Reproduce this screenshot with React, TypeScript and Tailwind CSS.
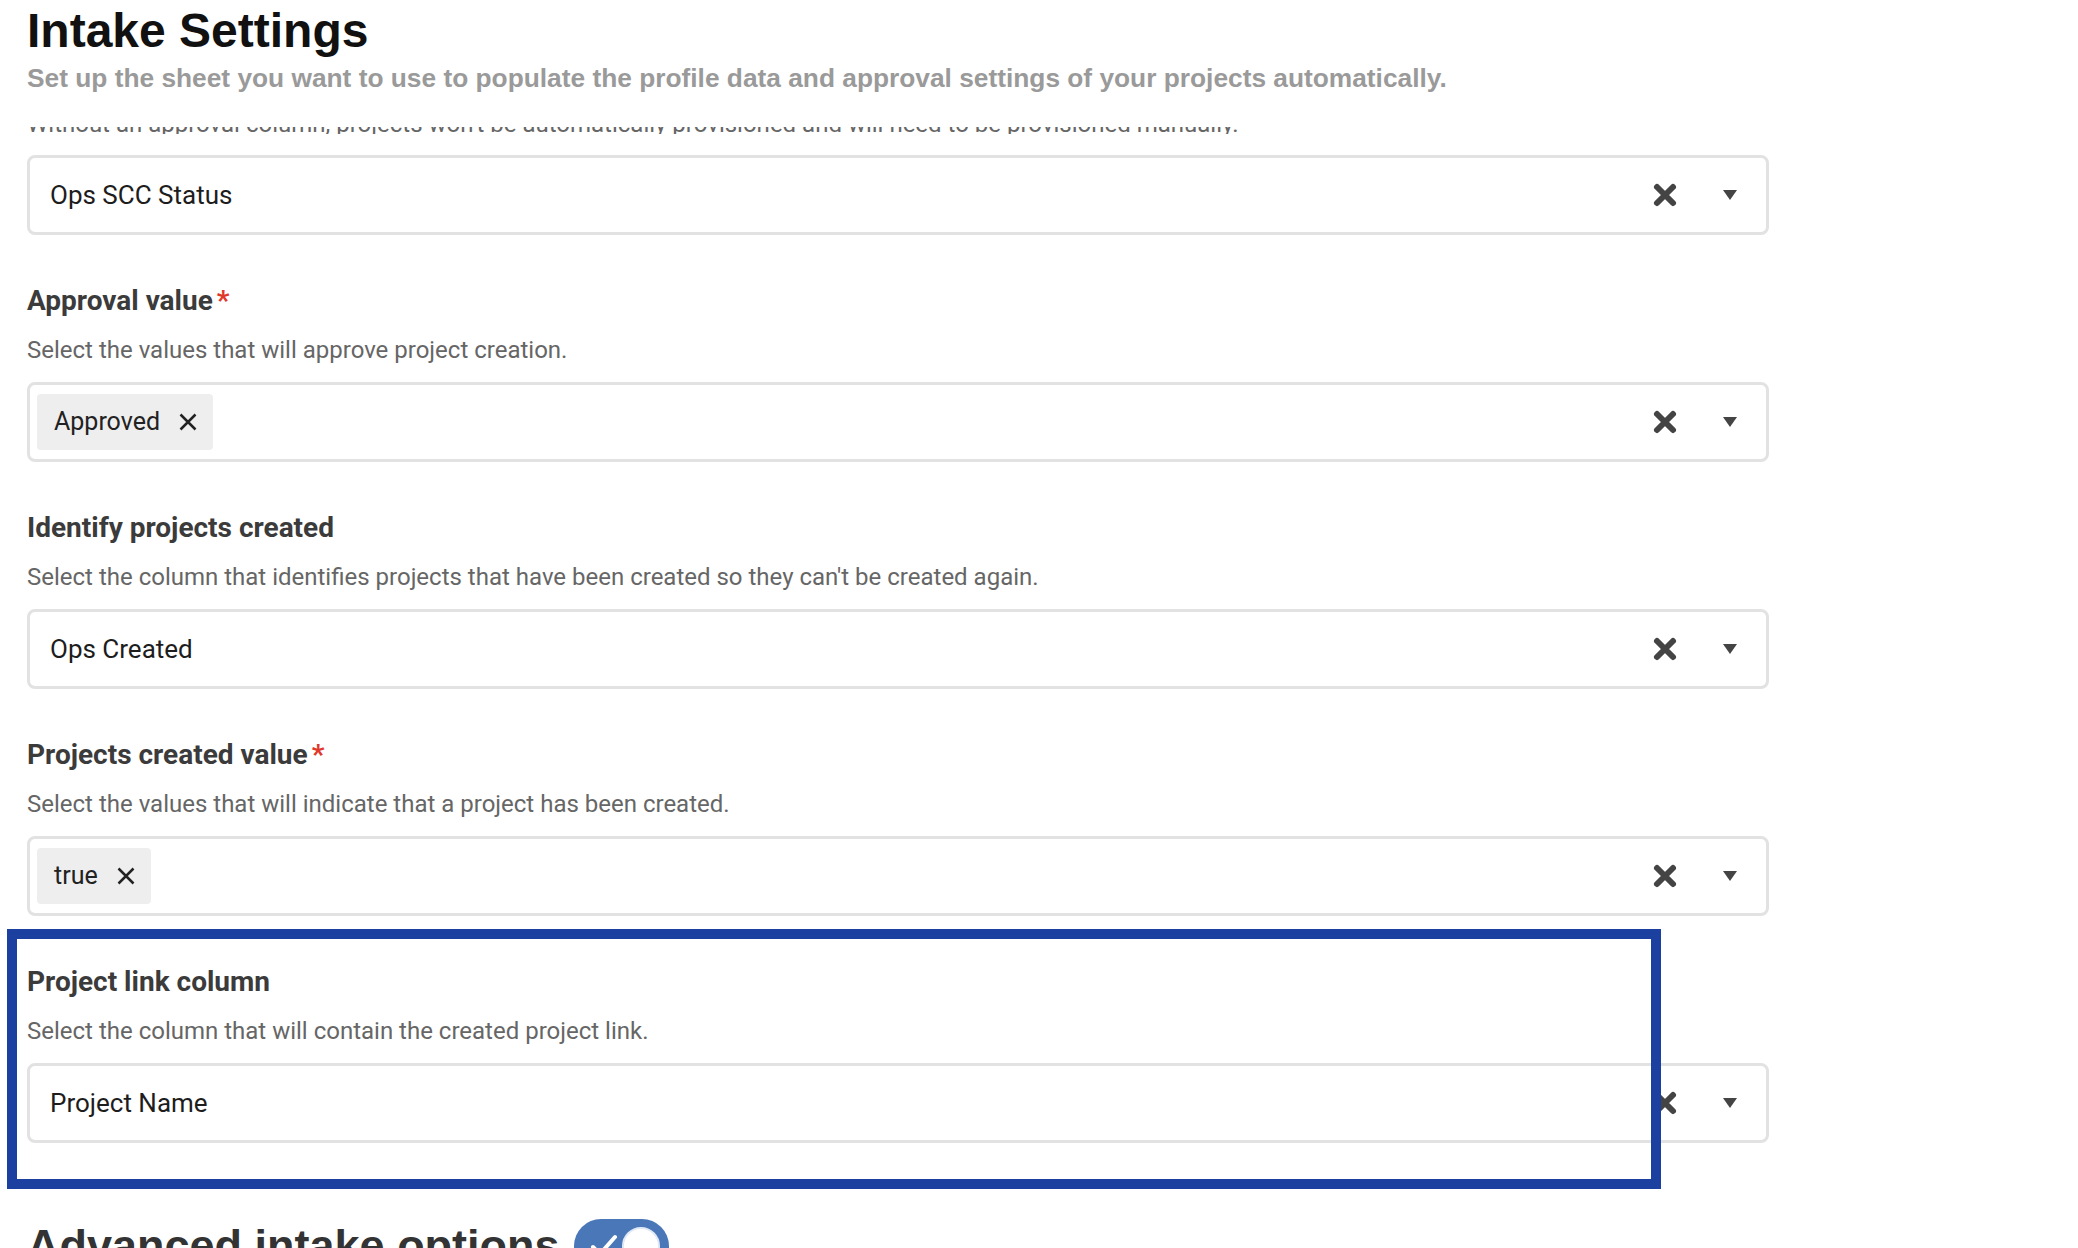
import React from "react";

const ClearIcon = () => (
  <svg width="26" height="26" viewBox="0 0 26 26" className="shrink-0 text-[#444]">
    <path d="M5 5 L21 21 M21 5 L5 21" stroke="currentColor" strokeWidth="6" strokeLinecap="round" />
  </svg>
);

const Caret = () => (
  <svg width="14" height="10" viewBox="0 0 14 10" className="shrink-0">
    <path d="M0 0 H14 L7 10 Z" fill="#444" />
  </svg>
);

const Chip = ({ label }: { label: string }) => (
  <div className="flex h-[56px] items-center gap-[19px] rounded-[4px] bg-[#eeeeee] pl-[17px] pr-[16px]">
    <span className="text-[25px] text-[#222]">{label}</span>
    <svg width="18" height="18" viewBox="0 0 18 18">
      <path d="M1.5 1.5 L16.5 16.5 M16.5 1.5 L1.5 16.5" stroke="#222" strokeWidth="2.5" />
    </svg>
  </div>
);

interface FieldProps {
  value?: string;
  chips?: string[];
}

const SelectField: React.FC<FieldProps> = ({ value, chips }) => {
  return (
    <div className="flex h-[80px] w-[1742px] items-center rounded-[8px] border-[3px] border-[#e2e2e2] bg-white pl-[7px] pr-[29px]">
      <div className="flex flex-1 items-center">
        {value && <span className="pl-[13px] text-[26px] text-[#1d1d1d]">{value}</span>}
        {chips?.map((c) => <Chip key={c} label={c} />)}
      </div>
      <ClearIcon />
      <div className="ml-[45px] flex">
        <Caret />
      </div>
    </div>
  );
};

interface SectionProps extends FieldProps {
  title: string;
  required?: boolean;
  description: string;
  children?: React.ReactNode;
}

const Section: React.FC<SectionProps> = ({ title, required, description, value, chips, children }) => {
  return (
    <div className="relative pt-[48px]">
      <div className="text-[28px] font-bold leading-[36px] text-[#3b3b3b]">
        {title}
        {required && <span className="ml-[4px] text-[#e0382b]">*</span>}
      </div>
      <p className="mt-[15px] text-[24px] leading-[32px] text-[#666]">{description}</p>
      <div className="mt-[16px]">
        <SelectField value={value} chips={chips} />
      </div>
      {children}
    </div>
  );
};

export default function App() {
  return (
    <div className="h-[1248px] w-full overflow-hidden bg-white px-[27px] font-[Roboto,sans-serif]">
      {/* Sticky header */}
      <header className="bg-white pb-[33px] pt-[7px] font-['Liberation_Sans',Arial,sans-serif]">
        <h1 className="text-[48px] font-bold leading-[48px] text-[#111]">Intake Settings</h1>
        <p className="mt-[7px] text-[26.3px] font-bold leading-[32px] text-[#9a9a9a]">
          Set up the sheet you want to use to populate the profile data and approval settings of your projects
          automatically.
        </p>
      </header>

      {/* Scrolled content, first description is clipped under the header */}
      <div className="flex h-[7px] flex-col justify-end overflow-hidden">
        <p className="shrink-0 whitespace-nowrap text-[24px] leading-[20px] text-[#666]">
          Without an approval column, projects won't be automatically provisioned and will need to be provisioned
          manually.
        </p>
      </div>
      <div className="mt-[21px]">
        <SelectField value="Ops SCC Status" />
      </div>

      <Section
        title="Approval value"
        required
        description="Select the values that will approve project creation."
        chips={["Approved"]}
      />
      <Section
        title="Identify projects created"
        description="Select the column that identifies projects that have been created so they can't be created again."
        value="Ops Created"
      />
      <Section
        title="Projects created value"
        required
        description="Select the values that will indicate that a project has been created."
        chips={["true"]}
      />
      <Section
        title="Project link column"
        description="Select the column that will contain the created project link."
        value="Project Name"
      >
        {/* highlight annotation */}
        <div className="pointer-events-none absolute left-[-20px] top-[13px] h-[260px] w-[1654px] border-[10px] border-[#1b409f]" />
      </Section>

      <div className="mt-[76px] flex items-center font-['Liberation_Sans',Arial,sans-serif]">
        <h2 className="text-[45px] font-bold leading-[54px] text-[#333]">Advanced intake options</h2>
        <div className="ml-[14px] flex h-[54px] w-[95px] items-center justify-between rounded-full bg-[#4a77b8] pl-[16px] pr-[9px]">
          <svg width="28" height="24" viewBox="0 0 28 24">
            <path d="M3 13 L10 20 L25 3" stroke="#fff" strokeWidth="4" fill="none" strokeLinecap="round" strokeLinejoin="round" />
          </svg>
          <div className="h-[38px] w-[38px] rounded-full border-[2px] border-[#dfe8f5] bg-white" />
        </div>
      </div>
    </div>
  );
}
